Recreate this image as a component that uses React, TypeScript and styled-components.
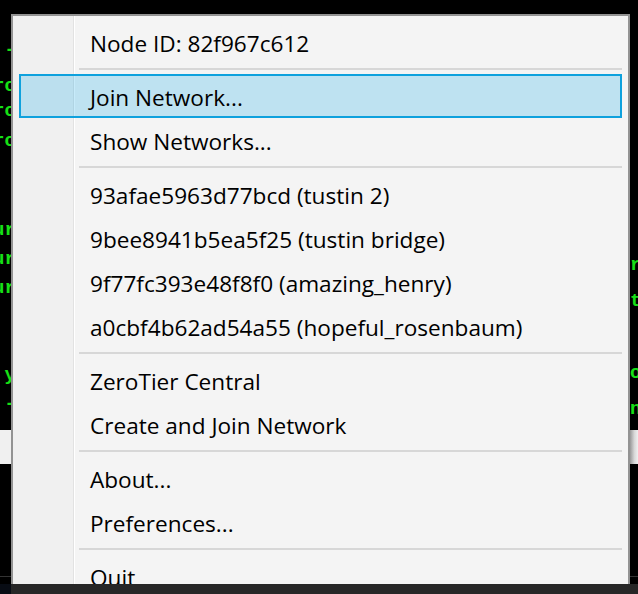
import React from "react";
import styled, { createGlobalStyle } from "styled-components";

const Global = createGlobalStyle`
  html, body { margin: 0; padding: 0; background: #000; }
  #root { width: 638px; height: 594px; }
`;

const Screen = styled.div`
  position: relative;
  width: 638px;
  height: 594px;
  overflow: hidden;
  background: #000;
`;

const Backdrop = styled.div`
  display: flex;
  flex-direction: column;
  height: 100%;
`;

const TerminalPane = styled.div`
  height: 430px;
  display: flex;
  justify-content: space-between;
  font-family: "Liberation Mono", "DejaVu Sans Mono", monospace;
  font-size: 19px;
  font-weight: bold;
  color: #16e016;
  white-space: pre;
`;

const LeftLines = styled.div`
  display: flex;
  flex-direction: column;
  margin-left: -7px;
  padding-top: 27px;
`;

const TermLine = styled.div<{ $h: number }>`
  height: ${(p) => p.$h}px;
  line-height: ${(p) => p.$h}px;
`;

const RightLines = styled.div`
  display: flex;
  flex-direction: column;
  width: 8px;
  padding-top: 247px;
`;

const LightBand = styled.div`
  height: 34px;
  display: flex;
  justify-content: space-between;
`;

const BandLeft = styled.div`
  width: 11px;
  background: #f0f0f0;
`;

const BandRight = styled.div`
  width: 9px;
  background: linear-gradient(to right, #8a8a8a, #d8d8d8 60%, #f0f0f0);
`;

const DarkRest = styled.div`
  flex: 1;
  display: flex;
  flex-direction: column;
  justify-content: flex-end;
  padding-bottom: 17px;
`;

const FaintLine = styled.div`
  height: 1px;
  background: #333;
`;

const Menu = styled.div`
  position: absolute;
  left: 11px;
  top: 14px;
  width: 615px;
  border: 2px solid #939393;
  border-bottom: none;
  padding: 4px 0 20px;
  background: linear-gradient(
    to right,
    #f0f0f0 0 60px,
    #e2e2e2 60px 61px,
    #ffffff 61px 62px,
    #f4f4f4 62px
  );
  font-family: "Open Sans", "Noto Sans", sans-serif;
  font-size: 22.6px;
  color: #000;
`;

const Item = styled.div<{ $active?: boolean }>`
  height: 44px;
  box-sizing: border-box;
  margin: 0 6px;
  padding-left: 69px;
  display: flex;
  align-items: center;
  padding-top: 2px;
  border: 2px solid ${(p) => (p.$active ? "#0ea1dd" : "transparent")};
  background: ${(p) => (p.$active ? "rgba(0, 162, 230, 0.22)" : "transparent")};
  white-space: nowrap;
`;

const Separator = styled.div`
  height: 2px;
  margin: 4px 6px 4px 66px;
  background: #d7d7d7;
`;

const Taskbar = styled.div`
  position: absolute;
  left: 0;
  right: 0;
  bottom: 0;
  height: 10px;
  display: flex;
`;

const TaskbarEdge = styled.div`
  width: 11px;
  background: #080c14;
`;

const TaskbarMain = styled.div`
  flex: 1;
  background: #272727;
`;

const leftLines: [string, number][] = [
  [" -", 47],
  ["ro", 25],
  ["ro", 25],
  ["ro", 34],
  ["", 29],
  ["", 29],
  ["ur", 29],
  ["ur", 29],
  ["ur", 29],
  ["", 29],
  ["", 29],
  [" y", 29],
  [" -", 29],
];

const rightLines = ["r", "t", "", "o", "n"];

type Entry = { label: string; active?: boolean } | "sep";

const entries: Entry[] = [
  { label: "Node ID: 82f967c612" },
  "sep",
  { label: "Join Network...", active: true },
  { label: "Show Networks..." },
  "sep",
  { label: "93afae5963d77bcd (tustin 2)" },
  { label: "9bee8941b5ea5f25 (tustin bridge)" },
  { label: "9f77fc393e48f8f0 (amazing_henry)" },
  { label: "a0cbf4b62ad54a55 (hopeful_rosenbaum)" },
  "sep",
  { label: "ZeroTier Central" },
  { label: "Create and Join Network" },
  "sep",
  { label: "About..." },
  { label: "Preferences..." },
  "sep",
  { label: "Quit" },
];

export default function App() {
  return (
    <>
      <Global />
      <Screen>
        <Backdrop>
          <TerminalPane>
            <LeftLines>
              {leftLines.map(([t, h], i) => (
                <TermLine key={i} $h={h}>
                  {t}
                </TermLine>
              ))}
            </LeftLines>
            <RightLines>
              {rightLines.map((t, i) => (
                <TermLine key={i} $h={36}>
                  {t}
                </TermLine>
              ))}
            </RightLines>
          </TerminalPane>
          <LightBand>
            <BandLeft />
            <BandRight />
          </LightBand>
          <DarkRest>
            <FaintLine />
          </DarkRest>
        </Backdrop>
        <Menu>
          {entries.map((e, i) =>
            e === "sep" ? (
              <Separator key={i} />
            ) : (
              <Item key={i} $active={e.active}>
                {e.label}
              </Item>
            )
          )}
        </Menu>
        <Taskbar>
          <TaskbarEdge />
          <TaskbarMain />
        </Taskbar>
      </Screen>
    </>
  );
}
